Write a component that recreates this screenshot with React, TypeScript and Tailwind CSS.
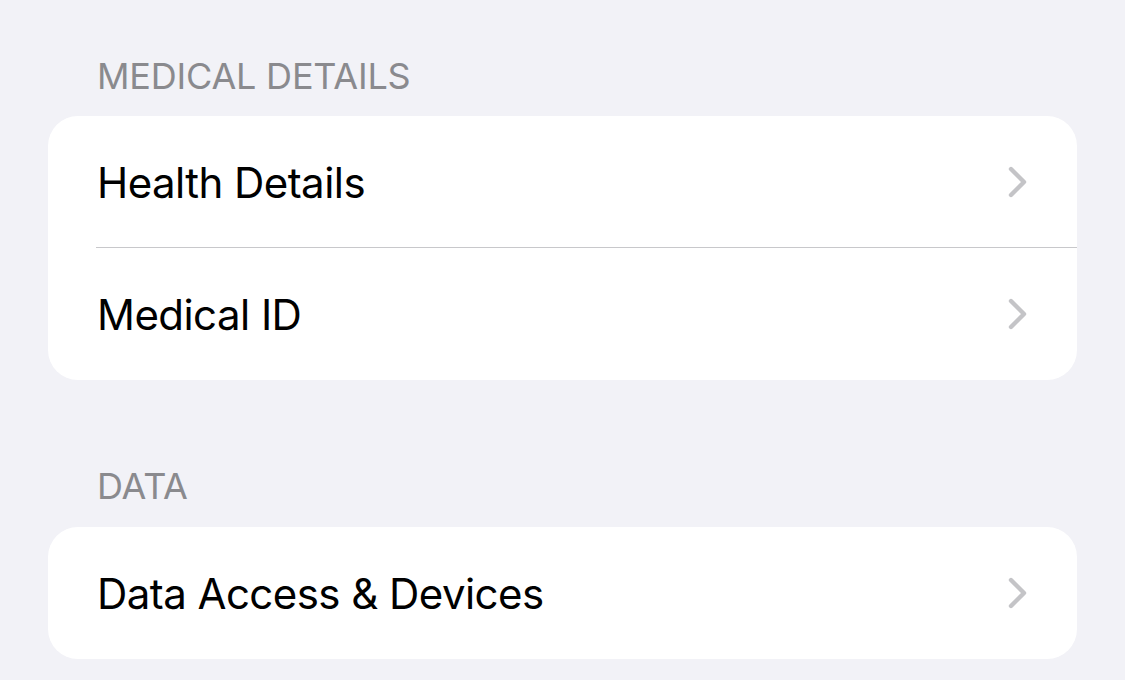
import React from "react";

const Chevron = () => (
  <svg width="22" height="34" viewBox="0 0 22 34" className="shrink-0">
    <polyline points="4,4 17,17 4,30" fill="none" stroke="#c4c4c7" strokeWidth="4.4" strokeLinecap="round" strokeLinejoin="round" />
  </svg>
);

const Row = ({ label, sep }: { label: string; sep?: boolean }) => (
  <div className="relative flex h-[132px] items-center pl-[49px] pr-[48px]">
    <span className="flex-1 text-[42px] text-black tracking-[-0.55px]">{label}</span>
    <Chevron />
    {sep && <div className="absolute bottom-0 left-[48px] right-0 h-px bg-[#c8c8cb]" />}
  </div>
);

export default function App() {
  return (
    <div
      className="w-[1125px] h-[680px] overflow-hidden bg-[#f2f2f7] px-[48px] pt-[54px]"
      style={{ fontFamily: "Inter, 'Noto Sans', sans-serif" }}
    >
      <div className="ml-[49px] text-[36px] leading-[44px] text-[#8a8a8e] tracking-[-0.2px]">MEDICAL DETAILS</div>
      <div className="mt-[18px] overflow-hidden rounded-[30px] bg-white">
        <Row label="Health Details" sep />
        <Row label="Medical ID" />
      </div>
      <div className="mt-[84px] ml-[49px] text-[36px] leading-[44px] text-[#8a8a8e] tracking-[-0.2px]">DATA</div>
      <div className="mt-[19px] overflow-hidden rounded-[30px] bg-white">
        <Row label="Data Access & Devices" />
      </div>
    </div>
  );
}
